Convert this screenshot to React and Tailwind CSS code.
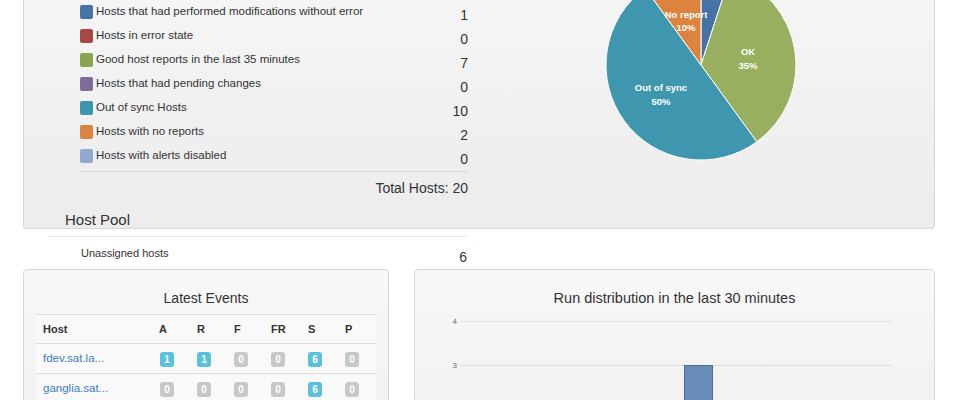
const legend = [
  { color: 'bg-[#4572A7]', label: 'Hosts that had performed modifications without error', count: 1 },
  { color: 'bg-[#AA4643]', label: 'Hosts in error state', count: 0 },
  { color: 'bg-[#89A54E]', label: 'Good host reports in the last 35 minutes', count: 7 },
  { color: 'bg-[#80699B]', label: 'Hosts that had pending changes', count: 0 },
  { color: 'bg-[#3D96AE]', label: 'Out of sync Hosts', count: 10 },
  { color: 'bg-[#DB843D]', label: 'Hosts with no reports', count: 2 },
  { color: 'bg-[#92A8CD]', label: 'Hosts with alerts disabled', count: 0 },
]

const events = [
  { host: 'fdev.sat.la...', counts: [1, 1, 0, 0, 6, 0] },
  { host: 'ganglia.sat...', counts: [0, 0, 0, 0, 6, 0] },
]

const slices = [
  { from: 0, to: 18, fill: '#4572A7' },
  { from: 18, to: 144, fill: '#97AF5E' },
  { from: 144, to: 324, fill: '#3F97AF' },
  { from: 324, to: 360, fill: '#DC843E' },
]

function point(cx, cy, r, deg) {
  const a = (deg * Math.PI) / 180
  return [cx + r * Math.sin(a), cy - r * Math.cos(a)]
}

function slicePath(cx, cy, r, from, to) {
  const [x1, y1] = point(cx, cy, r, from)
  const [x2, y2] = point(cx, cy, r, to)
  const large = to - from > 180 ? 1 : 0
  return `M${cx},${cy} L${x1},${y1} A${r},${r} 0 ${large} 1 ${x2},${y2} Z`
}

function Pie() {
  const cx = 221
  const cy = 65
  const r = 95
  return (
    <svg width="454" height="170" className="block">
      {slices.map((s) => (
        <path key={s.from} d={slicePath(cx, cy, r, s.from, s.to)} fill={s.fill} stroke="#ffffff" strokeWidth="1" strokeLinejoin="round" />
      ))}
      <g fill="#ffffff" fontSize="9.5" fontWeight="bold" textAnchor="middle" fontFamily="'Liberation Sans', Arial, sans-serif">
        <text x="206" y="18">No report</text>
        <text x="206" y="31">10%</text>
        <text x="268" y="55">OK</text>
        <text x="268" y="69">35%</text>
        <text x="181" y="91">Out of sync</text>
        <text x="181" y="105">50%</text>
      </g>
    </svg>
  )
}

function Badge({ n }) {
  const color = n > 0 ? 'bg-[#5bc0de]' : 'bg-[#c8c8c8]'
  return (
    <span className={`inline-flex h-[15px] w-[14px] items-center justify-center rounded-[3px] text-[10px] font-bold leading-none text-white ${color}`}>
      {n}
    </span>
  )
}

function RunChart() {
  return (
    <svg width="519" height="95" className="block">
      <g stroke="#dedede" strokeWidth="1">
        <line x1="45" y1="14.5" x2="477" y2="14.5" />
        <line x1="45" y1="58.5" x2="477" y2="58.5" />
      </g>
      <g fill="#666666" fontSize="8" textAnchor="end" fontFamily="'Liberation Sans', Arial, sans-serif">
        <text x="42" y="17">4</text>
        <text x="42" y="61">3</text>
      </g>
      <rect x="269.5" y="58.5" width="28" height="60" fill="#6a8cb9" stroke="#4a6f9f" strokeWidth="1" />
    </svg>
  )
}

export default function App() {
  return (
    <div className="h-[400px] w-[954px] overflow-hidden bg-white font-['Liberation_Sans',Arial,sans-serif] text-[#333]">
      <div className="ml-[23px] flex w-[912px] rounded-b-[4px] border-x border-b border-[#d8d8d8] bg-gradient-to-b from-[#f5f5f5] to-[#ececec]">
        <div className="w-[456px] shrink-0">
          <div className="pl-[56px] pr-[12px]">
            {legend.map((row) => (
              <div key={row.label} className="flex h-[24px] items-start">
                <span className={`mt-[5px] h-[14px] w-[13px] shrink-0 rounded-[2px] ${row.color}`}></span>
                <span className="ml-[3px] mt-[4px] flex-1 text-[11.5px] leading-[15px]">{row.label}</span>
                <span className="mt-[7px] text-[14px] leading-[16px]">{row.count}</span>
              </div>
            ))}
            <div className="mt-[3px] border-t border-[#d9d9d9]"></div>
            <div className="mt-[8px] text-right text-[14px] leading-[16px]">Total Hosts: 20</div>
          </div>
          <div className="ml-[41px] mt-[15px] text-[15px] leading-[17px]">Host Pool</div>
        </div>
        <div className="flex-1">
          <Pie />
        </div>
      </div>

      <div className="ml-[48px] mt-[7px] w-[419px] border-t border-[#e3e3e3]"></div>
      <div className="ml-[81px] flex w-[386px] items-start">
        <span className="mt-[9px] flex-1 text-[11px] leading-[14px]">Unassigned hosts</span>
        <span className="mt-[12px] text-[14px] leading-[16px]">6</span>
      </div>

      <div className="ml-[23px] mt-[4px] flex gap-[25px]">
        <div className="h-[140px] w-[366px] rounded-[4px] border border-[#d8d8d8] bg-gradient-to-b from-[#f8f8f8] to-[#f1f1f1] px-[12px] pt-[19px]">
          <div className="text-center text-[14px] leading-[18px]">Latest Events</div>
          <table className="mt-[7px] w-[340px] table-fixed border-collapse text-[11px]">
            <colgroup>
              <col className="w-[119px]" />
              <col className="w-[37px]" />
              <col className="w-[37px]" />
              <col className="w-[37px]" />
              <col className="w-[37px]" />
              <col className="w-[37px]" />
              <col className="w-[36px]" />
            </colgroup>
            <thead>
              <tr className="h-[29px] border-y border-[#dddddd] bg-[#f9f9f9] text-left font-bold">
                <th className="pl-[7px]">Host</th>
                <th className="pl-[4px]">A</th>
                <th className="pl-[5px]">R</th>
                <th className="pl-[5px]">F</th>
                <th className="pl-[5px]">FR</th>
                <th className="pl-[5px]">S</th>
                <th className="pl-[5px]">P</th>
              </tr>
            </thead>
            <tbody>
              {events.map((ev) => (
                <tr key={ev.host} className="h-[30px] border-b border-[#dddddd] bg-[#f9f9f9]">
                  <td className="pl-[7px] text-[11.5px] text-[#3a80c2]">{ev.host}</td>
                  {ev.counts.map((n, i) => (
                    <td key={i} className="pl-[5px] pt-[1px]">
                      <Badge n={n} />
                    </td>
                  ))}
                </tr>
              ))}
            </tbody>
          </table>
        </div>
        <div className="h-[140px] w-[521px] rounded-[4px] border border-[#d8d8d8] bg-gradient-to-b from-[#f8f8f8] to-[#f1f1f1] pt-[19px]">
          <div className="text-center text-[14.5px] leading-[18px]">Run distribution in the last 30 minutes</div>
          <RunChart />
        </div>
      </div>
    </div>
  )
}
